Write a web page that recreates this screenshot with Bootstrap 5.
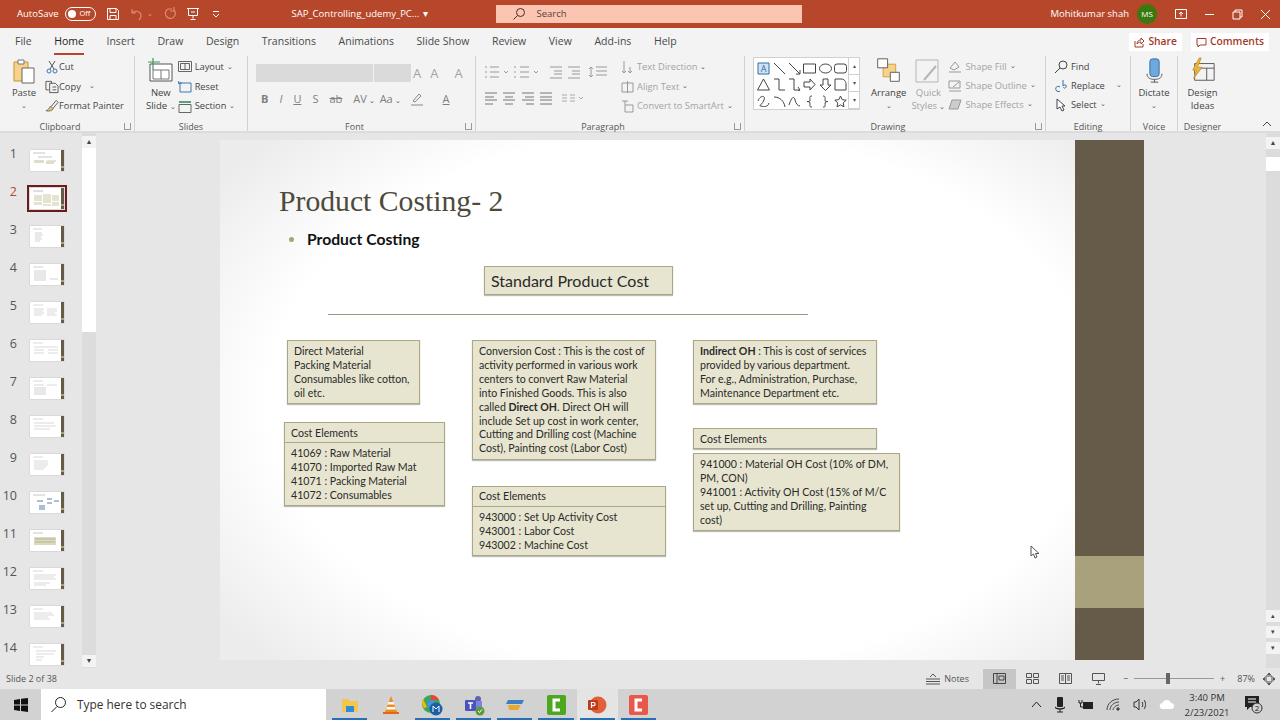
<!DOCTYPE html>
<html lang="en">
<head>
<meta charset="UTF-8">
<title>PowerPoint - Product Costing</title>
<link href="https://cdn.jsdelivr.net/npm/bootstrap@5.3.0/dist/css/bootstrap.min.css" rel="stylesheet">
<style>
    html, body { width: 1280px; height: 720px; overflow: hidden; }
    body { font-family: "Open Sans", "Noto Sans", sans-serif; font-size: 10px; color: #444; background: #e6e6e6; }
    svg { display: block; flex: none; }

    .title-bar { height: 28px; background: #b7472a; color: #fff; padding-left: 17px; }
    .title-bar .ts { font-size: 9.5px; }
    .toggle-off { width: 31px; height: 14px; border: 1px solid #fff; border-radius: 7px; margin: 0 10px 0 6px; padding-left: 2px; font-size: 7.5px; gap: 4px; }
    .toggle-dot { width: 8px; height: 8px; border-radius: 50%; background: #fff; }
    .qa-undo { margin-left: 9px; } .qa-redo { margin-left: 11px; } .qa-show { margin-left: 8px; } .qa-more { margin-left: 12px; }
    .file-name { margin-left: 72px; width: 204px; }
    .search-box { width: 306px; height: 18px; background: #fbc5b1; color: #5a4038; padding-left: 16px; gap: 11px; font-size: 9.5px; }
    .user-name { margin-right: 8px; }
    .avatar { width: 20px; height: 20px; border-radius: 50%; background: #39790f; font-size: 8px; margin-right: 18px; }
    .win-btns { gap: 17px; padding-right: 9px; }

    .tabs { height: 28px; background: #f3f3f3; padding-left: 15px; gap: 22.6px; font-size: 10.5px; color: #4a4a4a; }
    .tab-on { color: #222; position: relative; }
    .tab-on::after { content: ""; position: absolute; left: 0; right: 0; bottom: -5px; height: 2px; background: #b7472a; }
    .top-btn { height: 18px; background: #fff; color: #a23a2a; font-weight: 600; gap: 3px; padding: 0 5px; font-size: 10.3px; }
    .top-btns { gap: 9px; margin-right: 11px; }

    .ribbon { height: 77px; background: #f3f3f3; border-bottom: 2px solid #dcdcdc; }
    .rb-group { position: relative; border-right: 1px solid #d2d2d2; flex: none; }
    .rb-body { height: 60px; padding-top: 1px; }
    .rb-label { text-align: center; font-size: 9px; color: #555; line-height: 12px; margin-top: 5px; }
    .lab-shift { padding-right: 14px; }
    .launcher { position: absolute; right: 3px; bottom: 1px; width: 7px; height: 7px; border: 1px solid #999; border-top: 0; }
    .w-clip { width: 135px; } .w-slides { width: 113px; } .w-font { width: 228px; }
    .w-para { width: 269px; } .w-draw { width: 301px; } .w-edit { width: 85px; }
    .w-voice { width: 47px; } .w-design { width: 49px; border-right: 0; }

    .big-btn { text-align: center; line-height: 13px; font-size: 9.5px; color: #444; }
    .big-btn svg { margin: 0 auto 2px; }
    .btn-paste { margin-left: 11px; } .btn-new { margin-left: 11px; }
    .btn-arrange { margin-left: 11px; } .btn-quick { margin-left: 5px; }
    .chev { font-size: 7px; color: #555; }
    .stack > div { height: 20px; gap: 3px; white-space: nowrap; font-size: 9.3px; color: #444; }
    .stack.rows-19 > div { height: 19px; }
    .w-clip .stack > div { gap: 0; }
    .st-slides { margin-left: 2px; } .st-para { margin-left: 12px; } .st-shape { margin-left: 3px; }
    .off, .stack > div.off { color: #a3a3a3; }

    .font-row1 { margin-top: 7px; height: 18px; }
    .font-a { font-size: 13px; line-height: 18px; color: #a3a3a3; margin-left: 2px; }
    .font-a2 { margin-left: 9px; }
    .font-a3 { margin-left: 16px; }
    .combo { height: 18px; background: #dadada; }
    .combo-a { width: 117px; margin-right: 1px; } .combo-b { width: 37px; }
    .fmt { margin-top: 10px; height: 14px; padding-left: 5px; font-size: 11px; color: #808080; gap: 11px; }
    .fmt-wide { margin-right: -6px; }
    .fmt-pen { margin-left: -2px; } .fmt-color { margin-left: 8px; }
    .para-row2 { margin-top: 12px; }
    .gallery { width: 107px; height: 53px; background: #fff; border: 1px solid #d0d0d0; }
    .gal-grid { width: 94px; padding: 2px 0 0 2px; display: grid; grid-template-columns: repeat(6, 15.4px); grid-auto-rows: 16.5px; place-items: center; }
    .gal-side { width: 11px; border-left: 1px solid #d0d0d0; }
    .gal-side > div { flex: 1; border-bottom: 1px solid #d0d0d0; font-size: 6px; color: #555; }

    .main-area { height: 535px; }
    .thumbs { width: 82px; padding-top: 7px; }
    .thumb-row { height: 38px; }
    .thumb-no { width: 17px; text-align: right; font-size: 12.5px; color: #555; padding-top: 5px; }
    .thumb-no.cur { color: #b7472a; }
    .thumb-box { margin: 10px 0 0 13px; width: 34px; height: 21px; background: #fff; box-shadow: 0 0 1px #999; }
    .thumb-box.cur { outline: 2px solid #6d1a1f; outline-offset: 1px; }
    .thumb-faint { opacity: .65; }
    .vscroll { width: 14px; background: #dcdcdc; }
    .v-btn { height: 12px; background: #f3f3f3; font-size: 7px; color: #444; flex: none; }
    .v-first { margin-top: 3px; } .v-last { margin-bottom: 1px; }
    .v-thumb { height: 184px; background: #fff; flex: none; }
    .v-thumb-r { height: 14px; background: #fff; margin-top: 8px; flex: none; }
    .v-gap { margin-top: 4px; } .v-end { margin-bottom: 14px; }

    .stage { position: relative; flex: 1; }
    .slide { position: absolute; left: 124px; top: 7px; width: 924px; height: 520px; background: radial-gradient(ellipse 62% 72% at 50% 50%, #fff 72%, #ececec 100%); overflow: hidden; font-family: "Lato", "Open Sans", sans-serif; color: #2a2a2a; }
    .band { position: absolute; left: 855px; top: 0; width: 69px; height: 100%; background: #665a48; }
    .band-mid { position: absolute; left: 855px; top: 416px; width: 69px; height: 52px; background: #a9a17c; }
    .s-title { position: absolute; left: 59px; top: 41px; font-family: "Liberation Serif", serif; font-size: 29.7px; line-height: 40px; color: #4e4a3b; white-space: nowrap; }
    .s-bullet { position: absolute; left: 69px; top: 97px; width: 5px; height: 5px; border-radius: 50%; background: #a9a17c; }
    .s-sub { position: absolute; left: 87px; top: 89px; font-weight: 700; font-size: 15.7px; line-height: 20px; color: #111; }
    .s-rule { position: absolute; left: 108px; top: 174px; width: 480px; height: 1px; background: #9a9878; }
    .sbox { position: absolute; background: #e7e5cf; border: 1px solid #a9a883; box-shadow: 0 1px 1px #bbb; font-size: 10.6px; line-height: 13.9px; padding: 4px 6px; }
    .sbox-head { border-bottom: 1px solid #a9a883; height: 20px; padding: 3px 6px; margin: -4px -6px 4px; }
    .b-ce1 .sbox-head { padding-top: 4px; }
    .b-std { left: 264px; top: 126px; width: 189px; height: 29px; font-size: 16px; line-height: 27px; padding: 0 6px; }
    .b-dm { left: 67px; top: 200px; width: 133px; height: 64px; }
    .b-ce1 { left: 64px; top: 282px; width: 161px; height: 84px; }
    .b-cc { left: 252px; top: 200px; width: 184px; height: 120px; padding-right: 10px; }
    .b-ce2 { left: 252px; top: 346px; width: 194px; height: 70px; }
    .b-ind { left: 473px; top: 200px; width: 184px; height: 64px; }
    .b-ce3h { left: 473px; top: 288px; width: 184px; height: 21px; }
    .b-ce3 { left: 473px; top: 313px; width: 207px; height: 78px; }
    .s-cursor { position: absolute; left: 810px; top: 405px; }

    .status-bar { height: 21px; background: #e6e6e6; padding-left: 6px; font-size: 9px; color: #555; }
    .notes-label { margin: 0 14px 0 4px; }
    .view-btn { width: 33px; height: 20px; }
    .view-btn.cur { background: #c6c6c6; }
    .zoom-track { width: 80px; height: 1px; background: #999; position: relative; margin: 0 6px; }
    .zoom-knob { position: absolute; left: 32px; top: -5px; width: 4px; height: 11px; background: #666; }
    .zoom-pct { margin-left: 12px; }
    .zoom-fit { margin: 0 5px 0 8px; }

    .taskbar { height: 31px; background: #d2d2d2; color: #222; }
    .start-cell { width: 41px; }
    .win-search { width: 285px; height: 31px; background: #fff; padding-left: 9px; gap: 10px; font-size: 11.9px; color: #333; }
    .task-icons { margin-left: 3px; }
    .task-cell { position: relative; width: 41.3px; height: 31px; }
    .task-cell.cur { background: #e4e4e4; }
    .task-cell.run::after { content: ""; position: absolute; left: 3px; right: 3px; bottom: 0; height: 2px; background: #2a6fb5; }
    .tray { gap: 12px; padding-right: 17px; }
    .clock { text-align: center; font-size: 9.5px; line-height: 15px; color: #333; margin-left: -12px; width: 66px; }
    .notify { margin-left: -8px; }
</style>
</head>
<body>

<!-- title bar -->
<div class="title-bar d-flex align-items-center">
    <span class="ts">AutoSave</span>
    <div class="toggle-off d-flex align-items-center"><span class="toggle-dot"></span><span>Off</span></div>
    <svg width="14" height="14" viewBox="0 0 14 14" fill="none" stroke="#fff"><path d="M1.5 1.5h9l2 2v9h-11zM4 1.5v4h6v-4M4 12.5v-4h6v4"/></svg>
    <svg class="qa-undo" width="14" height="14" viewBox="0 0 14 14" fill="none" stroke="#d98d76" stroke-width="1.2"><path d="M3 2v4h4M3 6c3-3 9-2 9 3 0 2-1 3-2 4"/></svg>
    <span class="ms-1 chev text-white-50">&#8964;</span>
    <svg class="qa-redo" width="14" height="14" viewBox="0 0 14 14" fill="none" stroke="#d98d76" stroke-width="1.2"><path d="M8 2h-4a5 5 0 1 0 6 1M10 0v4h-4"/></svg>
    <svg class="qa-show" width="14" height="14" viewBox="0 0 14 14" fill="none" stroke="#fff"><path d="M1 1.5h12M2.5 1.5v7h9v-7M7 8.5v3M4.500 12.500h5M5 5h4"/></svg>
    <svg class="qa-more" width="8" height="8" viewBox="0 0 8 8" fill="none" stroke="#fff"><path d="M1 1.500h6M1 4l3 3 3-3"/></svg>
    <div class="file-name ts d-flex"><span>SAP_Controlling_udemy_PC...</span><span class="ms-1">&#9662;</span></div>
    <div class="search-box d-flex align-items-center">
        <svg width="14" height="14" viewBox="0 0 14 14" fill="none" stroke="#4a2e25"><circle cx="8.500" cy="5.500" r="4"/><path d="M5.500 8.500l-4 4"/></svg>
        <span>Search</span>
    </div>
    <div class="ms-auto user-name ts">Mohitkumar shah</div>
    <div class="avatar d-flex align-items-center justify-content-center">MS</div>
    <div class="win-btns d-flex align-items-center">
        <svg width="12" height="10" viewBox="0 0 12 10" fill="none" stroke="#fff"><path d="M.5.500h11v9H.5zM6 7.500V3M4 5l2-2 2 2"/></svg>
        <svg width="11" height="11" viewBox="0 0 11 11" stroke="#fff"><path d="M1 5.500h9"/></svg>
        <svg width="11" height="11" viewBox="0 0 11 11" fill="none" stroke="#fff"><path d="M1 3h7v7H1zM3 3V1h7v7H8"/></svg>
        <svg width="11" height="11" viewBox="0 0 11 11" stroke="#fff"><path d="M1 1l9 9M10 1l-9 9"/></svg>
    </div>
</div>

<!-- tabs -->
<div class="tabs d-flex align-items-center">
    <span>File</span><span class="tab-on">Home</span><span>Insert</span><span>Draw</span><span>Design</span><span>Transitions</span><span>Animations</span><span>Slide Show</span><span>Review</span><span>View</span><span>Add-ins</span><span>Help</span>
    <div class="ms-auto top-btns d-flex">
        <div class="top-btn d-flex align-items-center">
            <svg width="11" height="11" viewBox="0 0 11 11" fill="none" stroke="#a23a2a"><path d="M1 4v6h8V7M3 7c0-3 2-4 4-4V1l3 3-3 3V5C5 5 4 6 3 7z"/></svg>Share
        </div>
        <div class="top-btn d-flex align-items-center">
            <svg width="11" height="11" viewBox="0 0 11 11" fill="none" stroke="#a23a2a"><path d="M1 1.500h9v6.500H4l-2 2v-2H1z"/></svg>Comments
        </div>
    </div>
</div>

<!-- ribbon -->
<div class="ribbon d-flex">
    <div class="rb-group w-clip">
        <div class="rb-body d-flex">
            <div class="big-btn btn-paste">
                <svg width="26" height="27" viewBox="0 0 26 27" fill="none"><path d="M3 5h14v19H3z" fill="#f6d28a" stroke="#c9932f"/><path d="M7 3h6v4H7z" fill="#fff" stroke="#777"/><path d="M11 11h12v15H11z" fill="#fff" stroke="#666"/></svg>
                <div>Paste</div><div class="chev">&#8964;</div>
            </div>
            <div class="stack d-flex flex-column ms-2">
                <div class="d-flex align-items-center"><svg width="14" height="14" viewBox="0 0 14 14" fill="none" stroke="#555"><path d="M4 1l5 8M10 1L5 9"/><circle cx="4" cy="11" r="2" stroke="#3a78b5"/><circle cx="10" cy="11" r="2" stroke="#3a78b5"/></svg><span>Cut</span></div>
                <div class="d-flex align-items-center"><svg width="14" height="14" viewBox="0 0 15 14" fill="none" stroke="#555"><path d="M4 10H1V1h6v2M5 3h6l3 3v7H5zM8 7h4M8 10h4"/></svg><span>Copy</span><span class="chev ms-2">&#8964;</span></div>
                <div class="d-flex align-items-center"><svg width="14" height="14" viewBox="0 0 15 14" fill="none"><path d="M1 12c2 0 3-2 5-5l3 3c-2 2-4 3-8 2z" fill="#f2c56b" stroke="#666"/><path d="M7 7l5-6 2 2-5 6" stroke="#555"/></svg><span>Format Painter</span></div>
            </div>
        </div>
        <div class="rb-label lab-shift">Clipboard</div><span class="launcher"></span>
    </div>

    <div class="rb-group w-slides">
        <div class="rb-body d-flex">
            <div class="big-btn btn-new">
                <svg width="26" height="27" viewBox="0 0 26 27" fill="none"><path d="M2 7h22v17H2z" fill="#fff" stroke="#555"/><path d="M5 13h16v9H5zM13 13v9" stroke="#777"/><path d="M5 1v12M0 5h12" stroke="#3b9b5a" stroke-width="1.200"/></svg>
                <div>New</div><div>Slide <span class="chev">&#8964;</span></div>
            </div>
            <div class="stack st-slides d-flex flex-column">
                <div class="d-flex align-items-center"><svg width="14" height="13" viewBox="0 0 14 13" fill="none" stroke="#666"><path d="M.5 1.500h13v10H.5zM2.500 3.500h9v6h-9zM7 3.500v6"/></svg><span>Layout</span><span class="chev">&#8964;</span></div>
                <div class="d-flex align-items-center"><svg width="14" height="13" viewBox="0 0 14 13" fill="none" stroke="#3a78b5"><path d="M2 3h11v9H2zM0 3h4M1 1l-1 2 2 1"/></svg><span>Reset</span></div>
                <div class="d-flex align-items-center"><svg width="14" height="13" viewBox="0 0 14 13" fill="none"><path d="M1 1h12v2H1z" fill="#5aa27c"/><path d="M1 4.500h12v8H1z" stroke="#666"/></svg><span>Section</span><span class="chev">&#8964;</span></div>
            </div>
        </div>
        <div class="rb-label">Slides</div>
    </div>

    <div class="rb-group w-font">
        <div class="rb-body ps-2">
            <div class="font-row1 d-flex align-items-center">
                <div class="combo combo-a"></div><div class="combo combo-b"></div>
                <span class="font-a">A</span><span class="font-a font-a2">A</span><span class="font-a font-a3">A</span>
            </div>
            <div class="fmt d-flex align-items-center">
                <b>B</b><i>I</i><u>U</u><span>S</span><s>ab</s><span class="fmt-wide">AV<span class="chev"> &#8964;</span></span><span>Aa<span class="chev"> &#8964;</span></span>
                <svg class="fmt-pen" width="14" height="14" viewBox="0 0 14 14" fill="none" stroke="#888"><path d="M3 9l6-7 2 2-6 6zM1 13h12"/></svg>
                <span class="fmt-color"><u>A</u></span>
            </div>
        </div>
        <div class="rb-label lab-shift">Font</div><span class="launcher"></span>
    </div>

    <div class="rb-group w-para">
        <div class="rb-body d-flex ps-2">
            <div class="mt-1">
                <svg class="mt-1" width="125" height="14" viewBox="0 0 125 14" fill="none" stroke="#999"><path d="M1 2h2M6 2h9M1 7h2M6 7h9M1 12h2M6 12h9M20 6l2 2 2-2M30 2h2M36 2h9M30 7h2M36 7h9M30 12h2M36 12h9M50 6l2 2 2-2M66 2h12M70 6h8M70 9h8M66 13h12M84 2h12M88 6h8M88 9h8M84 13h12M112 2h11M112 6h11M112 10h11M107 2v10M105 4l2-2 2 2M105 10l2 2 2-2"/></svg>
                <svg class="para-row2" width="125" height="14" viewBox="0 0 125 14" fill="none" stroke="#777"><path d="M1 2h12M1 6h9M1 9h12M1 13h8M19 2h12M21 6h8M19 9h12M21 13h8M38 2h12M41 6h9M38 9h12M42 13h8M56 2h12M56 6h12M56 9h12M56 13h12"/><path d="M78 4h5M78 7h5M78 10h5M86 4h5M86 7h5M86 10h5M95 6l2 2 2-2" stroke="#aaa"/></svg>
            </div>
            <div class="stack st-para d-flex flex-column">
                <div class="off d-flex align-items-center"><svg width="13" height="14" viewBox="0 0 13 14" fill="none" stroke="#999"><path d="M3 1v12M1 11l2 2 2-2M9 7v6M7 11l2 2 2-2"/></svg><span>Text Direction</span><span class="chev">&#8964;</span></div>
                <div class="off d-flex align-items-center"><svg width="13" height="14" viewBox="0 0 13 14" fill="none" stroke="#999"><path d="M1 3h11v9H1zM6.500 1v12"/></svg><span>Align Text</span><span class="chev">&#8964;</span></div>
                <div class="off d-flex align-items-center"><svg width="13" height="14" viewBox="0 0 13 14" fill="none" stroke="#999"><path d="M4 6h8v7H4zM1 2h6M4 2v4"/></svg><span>Convert to SmartArt</span><span class="chev">&#8964;</span></div>
            </div>
        </div>
        <div class="rb-label lab-shift">Paragraph</div><span class="launcher"></span>
    </div>

    <div class="rb-group w-draw">
        <div class="rb-body d-flex ps-2">
            <div class="gallery d-flex">
                <div class="gal-grid">
                    <svg width="13" height="13" viewBox="0 0 13 13" fill="#cfe3f5" stroke="#2f6ea5"><path d="M1 1h11v11H1z"/><text x="6.500" y="10" font-size="9" text-anchor="middle" fill="#2f6ea5" stroke="none">A</text></svg>
                    <svg width="13" height="13" viewBox="0 0 13 13" stroke="#444" fill="none"><path d="M1 1l11 11"/></svg>
                    <svg width="13" height="13" viewBox="0 0 13 13" stroke="#444" fill="none"><path d="M1 1l11 11M8 12h4V8"/></svg>
                    <svg width="13" height="13" viewBox="0 0 13 13" stroke="#444" fill="none"><path d="M.5 2h12v9H.5z"/></svg>
                    <svg width="13" height="13" viewBox="0 0 13 13" stroke="#444" fill="none"><ellipse cx="6.500" cy="6.500" rx="6" ry="4.500"/></svg>
                    <svg width="13" height="13" viewBox="0 0 13 13" stroke="#444" fill="none"><rect x=".5" y="2" width="12" height="9" rx="2.500"/></svg>
                    <svg width="13" height="13" viewBox="0 0 13 13" stroke="#444" fill="none"><path d="M6.500 1l6 11H.5z"/></svg>
                    <svg width="13" height="13" viewBox="0 0 13 13" stroke="#444" fill="none"><path d="M1 1h5v11h6"/></svg>
                    <svg width="13" height="13" viewBox="0 0 13 13" stroke="#444" fill="none"><path d="M1 1h5v11h6M10 9l2 3-2 1"/></svg>
                    <svg width="13" height="13" viewBox="0 0 13 13" stroke="#444" fill="none"><path d="M1 4h6V1l5 5.500-5 5.500V9H1z"/></svg>
                    <svg width="13" height="13" viewBox="0 0 13 13" stroke="#444" fill="none"><path d="M4 1h5v6h3l-5.500 5.500L1 7h3z"/></svg>
                    <svg width="13" height="13" viewBox="0 0 13 13" stroke="#444" fill="none"><path d="M1 1h6c5 0 5 5 5 5v6H1z"/></svg>
                    <svg width="13" height="13" viewBox="0 0 13 13" stroke="#444" fill="none"><path d="M1 6c2-6 8-6 6-1S1 11 4 11c3 1 7 1 8-3"/></svg>
                    <svg width="13" height="13" viewBox="0 0 13 13" stroke="#444" fill="none"><path d="M1 2c6 0 10 4 11 10"/></svg>
                    <svg width="13" height="13" viewBox="0 0 13 13" stroke="#444" fill="none"><path d="M1 10c3-9 5-9 6-5s3 6 5 6"/></svg>
                    <svg width="13" height="13" viewBox="0 0 13 13" stroke="#444" fill="none"><path d="M9 1C6 1 7 3 7 5S6 6.500 4 6.500C6 6.500 7 7 7 9s-1 3 2 3"/></svg>
                    <svg width="13" height="13" viewBox="0 0 13 13" stroke="#444" fill="none"><path d="M4 1c3 0 2 2 2 4s1 1.500 3 1.500C7 6.500 6 7 6 9s1 3-2 3"/></svg>
                    <svg width="13" height="13" viewBox="0 0 13 13" stroke="#444" fill="none"><path d="M6.500 1l1.700 3.700 4 .5-3 2.700.8 4-3.500-2-3.500 2 .8-4-3-2.700 4-.5z"/></svg>
                </div>
                <div class="gal-side d-flex flex-column text-center">
                    <div class="d-flex align-items-center justify-content-center">&#9652;</div>
                    <div class="d-flex align-items-center justify-content-center">&#9662;</div>
                    <div class="d-flex align-items-center justify-content-center">&#9662;</div>
                </div>
            </div>
            <div class="big-btn btn-arrange">
                <svg width="27" height="27" viewBox="0 0 30 30" fill="none"><path d="M9 8h14v14H9z" fill="#f6d28a" stroke="#d39a3a"/><path d="M3 2h11v10H3z" fill="#fff" stroke="#555"/><path d="M17 17h10v10H17z" fill="#fff" stroke="#555"/></svg>
                <div>Arrange</div><div class="chev">&#8964;</div>
            </div>
            <div class="big-btn btn-quick off">
                <svg width="26" height="27" viewBox="0 0 26 27" fill="none" stroke="#b5b5b5"><path d="M1 3h22v22H1z"/><path d="M9 23l12-14" stroke-width="2"/></svg>
                <div class="off">Quick</div><div class="off">Styles <span class="chev">&#8964;</span></div>
            </div>
            <div class="stack st-shape rows-19 d-flex flex-column">
                <div class="off d-flex align-items-center"><svg width="14" height="14" viewBox="0 0 14 14" fill="none" stroke="#999"><path d="M2 8l5-6 4 5-5 3zM1 12h12"/></svg><span>Shape Fill</span><span class="chev">&#8964;</span></div>
                <div class="off d-flex align-items-center"><svg width="14" height="14" viewBox="0 0 14 14" fill="none" stroke="#999"><path d="M1 2h11v7H1zM1 12h12M5 8l6-5"/></svg><span>Shape Outline</span><span class="chev">&#8964;</span></div>
                <div class="off d-flex align-items-center"><svg width="14" height="14" viewBox="0 0 14 14" fill="#ccc" stroke="#999"><path d="M4 2h9l-3 9H1z"/></svg><span>Shape Effects</span><span class="chev">&#8964;</span></div>
            </div>
        </div>
        <div class="rb-label lab-shift">Drawing</div><span class="launcher"></span>
    </div>

    <div class="rb-group w-edit">
        <div class="rb-body stack rows-19 d-flex flex-column ps-2">
            <div class="d-flex align-items-center"><svg width="14" height="14" viewBox="0 0 14 14" fill="none" stroke="#444"><circle cx="9" cy="5" r="4"/><path d="M6 8l-5 5"/></svg><span>Find</span></div>
            <div class="d-flex align-items-center"><svg width="14" height="14" viewBox="0 0 14 14" fill="none" stroke="#2f6ea5"><path d="M6 8c-3-2-5 1-4 3s3 2 4 1M9 1v6c2-2 4-1 3 1s-2 1-3 0"/></svg><span>Replace</span><span class="chev ms-2">&#8964;</span></div>
            <div class="d-flex align-items-center"><svg width="14" height="14" viewBox="0 0 14 14" fill="#fff" stroke="#444"><path d="M3 1v10l3-2 2 4 2-1-2-4h3z"/></svg><span>Select</span><span class="chev">&#8964;</span></div>
        </div>
        <div class="rb-label">Editing</div>
    </div>

    <div class="rb-group w-voice">
        <div class="rb-body big-btn">
            <svg width="19" height="27" viewBox="0 0 20 29" fill="none"><rect x="5" y="2" width="10" height="19" rx="3" fill="#6fa8dc" stroke="#2f6ea5"/><path d="M2 18c0 5 4 6 8 6s8-1 8-6M10 24v3M6 27h8" stroke="#555"/></svg>
            <div>Dictate</div><div class="chev">&#8964;</div>
        </div>
        <div class="rb-label">Voice</div>
    </div>

    <div class="rb-group w-design">
        <div class="rb-body big-btn">
            <svg width="26" height="27" viewBox="0 0 28 29" fill="none"><path d="M5 7h21v18H5zM5 12h21M18 12v13" stroke="#555"/><path d="M10 1L3 14h4l-3 9 9-12H8l4-10z" fill="#f1b73c" stroke="#c9932f"/></svg>
            <div>Design</div><div>Ideas</div>
        </div>
        <div class="rb-label">Designer</div>
    </div>

    <div class="ms-auto align-self-end pe-2 pb-1">
        <svg width="10" height="6" viewBox="0 0 10 6" fill="none" stroke="#444"><path d="M1 5l4-4 4 4"/></svg>
    </div>
</div>

<!-- thumbnails + slide -->
<div class="main-area d-flex">
    <div class="thumbs" id="thumbs"></div>
    <div class="vscroll d-flex flex-column">
        <div class="v-btn v-first d-flex align-items-center justify-content-center">&#9650;</div>
        <div class="v-thumb"></div>
        <div class="flex-grow-1"></div>
        <div class="v-btn v-last d-flex align-items-center justify-content-center">&#9660;</div>
    </div>

    <div class="stage">
        <div class="slide">
            <div class="band"></div><div class="band-mid"></div>
            <div class="s-title">Product Costing- 2</div>
            <span class="s-bullet"></span>
            <div class="s-sub">Product Costing</div>
            <div class="sbox b-std">Standard Product Cost</div>
            <div class="s-rule"></div>

            <div class="sbox b-dm">Direct Material<br>Packing Material<br>Consumables like cotton, oil etc.</div>
            <div class="sbox b-ce1">
                <div class="sbox-head">Cost Elements</div>
                41069 : Raw Material<br>41070 : Imported Raw Mat<br>41071 : Packing Material<br>41072 : Consumables
            </div>

            <div class="sbox b-cc">Conversion Cost : This is the cost of activity performed in various work centers to convert Raw Material into Finished Goods. This is also called <b>Direct OH</b>. Direct OH will include Set up cost in work center, Cutting and Drilling cost (Machine Cost), Painting cost (Labor Cost)</div>
            <div class="sbox b-ce2">
                <div class="sbox-head">Cost Elements</div>
                943000 : Set Up Activity Cost<br>943001 : Labor Cost<br>943002 : Machine Cost
            </div>

            <div class="sbox b-ind"><b>Indirect OH</b> : This is cost of services provided by various department.<br>For e.g., Administration, Purchase, Maintenance Department etc.</div>
            <div class="sbox b-ce3h">Cost Elements</div>
            <div class="sbox b-ce3">941000 : Material OH Cost (10% of DM, PM, CON)<br>941001 : Activity OH Cost (15% of M/C set up, Cutting and Drilling, Painting<br>cost)</div>

            <svg class="s-cursor" width="10" height="14" viewBox="0 0 10 14" fill="#fff" stroke="#555"><path d="M1 1v10l2.500-2 1.500 4 2-1-1.500-3.500H9z"/></svg>
        </div>
    </div>

    <div class="vscroll d-flex flex-column">
        <div class="v-btn d-flex align-items-center justify-content-center mt-1">&#9650;</div>
        <div class="v-thumb-r"></div>
        <div class="flex-grow-1"></div>
        <div class="v-btn d-flex align-items-center justify-content-center">&#9652;</div>
        <div class="v-btn v-gap d-flex align-items-center justify-content-center">&#9662;</div>
        <div class="v-btn v-gap v-end d-flex align-items-center justify-content-center">&#9662;</div>
    </div>
</div>

<!-- status bar -->
<div class="status-bar d-flex align-items-center">
    <span>Slide 2 of 38</span>
    <div class="ms-auto d-flex align-items-center">
        <svg width="14" height="12" viewBox="0 0 14 12" fill="none" stroke="#555"><path d="M0 6h14M0 8.500h14M0 11h14M4 4l3-3 3 3"/></svg>
        <span class="notes-label">Notes</span>
        <div class="view-btn cur d-flex align-items-center justify-content-center"><svg width="13" height="11" viewBox="0 0 13 11" fill="none" stroke="#444"><path d="M.5.500h12v10H.5zM4 .5v10M6 3h5v4H6z"/></svg></div>
        <div class="view-btn d-flex align-items-center justify-content-center"><svg width="13" height="11" viewBox="0 0 13 11" fill="none" stroke="#555"><path d="M.5.500h5v4h-5zM7.500.500h5v4h-5zM.5 6.500h5v4h-5zM7.500 6.500h5v4h-5z"/></svg></div>
        <div class="view-btn d-flex align-items-center justify-content-center"><svg width="13" height="11" viewBox="0 0 13 11" fill="none" stroke="#555"><path d="M.5.500h12v10H.5zM6.500.500v10M2 3h3M2 5h3M2 7h3M8 3h3M8 5h3M8 7h3"/></svg></div>
        <div class="view-btn d-flex align-items-center justify-content-center"><svg width="13" height="12" viewBox="0 0 13 12" fill="none" stroke="#555"><path d="M.5.500h12v7H.5zM6.500 7.500v3M4 11.500h5"/></svg></div>
        <span class="ms-2">&minus;</span>
        <div class="zoom-track"><span class="zoom-knob"></span></div>
        <span>+</span>
        <span class="zoom-pct">87%</span>
        <svg class="zoom-fit" width="12" height="12" viewBox="0 0 12 12" fill="none" stroke="#555"><path d="M3 3h6v6H3zM6 0l-1.500 1.500h3zM6 12l-1.500-1.500h3zM0 6l1.500-1.500v3zM12 6l-1.500-1.500v3z"/></svg>
    </div>
</div>

<!-- taskbar -->
<div class="taskbar d-flex align-items-center">
    <div class="start-cell d-flex justify-content-center">
        <svg width="14" height="14" viewBox="0 0 14 14" fill="#111"><path d="M0 2l6-1v5.500H0zM7 .8l7-.8v6.500H7zM0 7.500h6V13l-6-1zM7 7.500h7V14l-7-1z"/></svg>
    </div>
    <div class="win-search d-flex align-items-center">
        <svg width="17" height="17" viewBox="0 0 17 17" fill="none" stroke="#222"><circle cx="10.500" cy="6.500" r="5"/><path d="M7 10.500l-5.500 5.500"/></svg>
        <span>Type here to search</span>
    </div>
    <div class="task-icons d-flex">
        <div class="task-cell run d-flex align-items-center justify-content-center"><svg width="18" height="18" viewBox="0 0 18 18"><path d="M1 3h6l2 2h8v11H1z" fill="#f3c64e"/><path d="M5 10h8v6H5z" fill="#2f8dd0"/></svg></div>
        <div class="task-cell d-flex align-items-center justify-content-center"><svg width="18" height="20" viewBox="0 0 18 20"><path d="M9 1l6 16H3z" fill="#f08a1d"/><path d="M6.500 7h5l.8 2.500H5.700zM5 12h8l.8 2.500H4.200z" fill="#fff"/><path d="M1 17h16v2H1z" fill="#e06a10"/></svg></div>
        <div class="task-cell run d-flex align-items-center justify-content-center"><svg width="22" height="22" viewBox="0 0 22 22"><circle cx="10" cy="10" r="9" fill="#3aa757"/><path d="M10 1a9 9 0 0 1 8 5h-8z" fill="#ea4335"/><path d="M2 5l4 8-3 1a9 9 0 0 1-1-9z" fill="#fbbc04"/><circle cx="10" cy="10" r="4" fill="#4a90e2"/><circle cx="15" cy="15" r="6.500" fill="#1a5fa8"/><path d="M12 18v-6l3 3 3-3v6" fill="none" stroke="#fff"/></svg></div>
        <div class="task-cell run d-flex align-items-center justify-content-center"><svg width="22" height="22" viewBox="0 0 22 22"><circle cx="15" cy="5" r="3" fill="#6264a7"/><path d="M8 7h11v9H8z" fill="#7b83eb"/><rect x="2" y="6" width="11" height="11" rx="1" fill="#4b53bc"/><path d="M5 9h5M7.500 9v6" stroke="#fff" stroke-width="1.500"/><circle cx="17" cy="17" r="4.500" fill="#5b9b3a"/><path d="M15 17l1.500 1.500 2.500-3" stroke="#fff" fill="none"/></svg></div>
        <div class="task-cell run d-flex align-items-center justify-content-center"><svg width="20" height="12" viewBox="0 0 20 12"><path d="M3 1h16l-2 4H1z" fill="#3d7fc4"/><path d="M3 6h13l-3 5H4z" fill="#e9a92f"/></svg></div>
        <div class="task-cell run d-flex align-items-center justify-content-center"><svg width="21" height="22" viewBox="0 0 21 22"><rect x="1" y="1" width="19" height="20" rx="2" fill="#4da81f"/><path d="M14 6H8v10h6" fill="none" stroke="#fff" stroke-width="3"/></svg></div>
        <div class="task-cell cur run d-flex align-items-center justify-content-center"><svg width="20" height="20" viewBox="0 0 20 20"><circle cx="11" cy="10" r="8.500" fill="#e0603a"/><rect x="1" y="5" width="10" height="10" rx="1" fill="#c13b1b"/><path d="M4.500 13V7.500h2a1.500 1.500 0 0 1 0 3.200h-2" fill="none" stroke="#fff" stroke-width="1.200"/></svg></div>
        <div class="task-cell run d-flex align-items-center justify-content-center"><svg width="21" height="22" viewBox="0 0 21 22"><rect x="1" y="1" width="19" height="20" rx="2" fill="#e8574a"/><path d="M14 6H8v10h6" fill="none" stroke="#fff" stroke-width="3"/></svg></div>
    </div>
    <div class="tray ms-auto d-flex align-items-center">
        <svg width="11" height="7" viewBox="0 0 11 7" fill="none" stroke="#222"><path d="M1 6l4.500-5L10 6"/></svg>
        <svg width="12" height="16" viewBox="0 0 12 16" fill="#222"><rect x="3" y="0" width="6" height="10" rx="1"/><path d="M1 9c0 3 10 3 10 0v2c-2 2-8 2-10 0zM5.500 12h1v3h-1zM3 14.500h6v1H3z"/></svg>
        <svg width="16" height="11" viewBox="0 0 16 11" fill="#222"><path d="M5 3h10v7H5z"/><path d="M1 1v3h3V1M2.500 4v4H5" fill="none" stroke="#222"/></svg>
        <svg width="15" height="13" viewBox="0 0 15 13" fill="none" stroke="#444"><path d="M1 12C1 6 6 1 13 1M4 12c0-4 4-8 9-8M7 12c0-2 3-5 6-5"/><circle cx="12" cy="11" r="1.200" fill="#444"/></svg>
        <svg width="14" height="13" viewBox="0 0 14 13" fill="none" stroke="#333"><path d="M1 4h2l3-3v11L3 9H1zM9 4c1 1 1 4 0 5M11 2c2 2 2 7 0 9"/></svg>
        <svg width="15" height="11" viewBox="0 0 15 11" fill="#fff"><path d="M4 10a3 3 0 0 1-.5-6A4.500 4.500 0 0 1 12 4a3 3 0 0 1 0 6z"/></svg>
        <div class="clock"><div>3:40 PM</div><div>2/23/2021</div></div>
        <svg class="notify" width="19" height="19" viewBox="0 0 19 19"><path d="M1 1h14v11H6l-3 3v-3H1z" fill="#222"/><path d="M4 4h8M4 7h8" stroke="#fff"/><circle cx="13" cy="13" r="5" fill="#d2d2d2" stroke="#333"/><text x="13" y="16" font-size="8" text-anchor="middle" fill="#222">2</text></svg>
    </div>
</div>

<script>
    // filmstrip on the left, 14 slides with a rough preview of each
    const strip = document.getElementById("thumbs");
    const previews = [
        '<path d="M3 3h12M8 7h14M4 11h10M17 11h9" stroke="#aaa"/><path d="M4 10h10v3H4zM16 11h8v3h-8z" fill="#cfcdb0"/>',
        '<path d="M3 3h10" stroke="#999"/><path d="M4 7h8v6H4zM13 6h8v9h-8zM22 7h7v6h-7zM4 14h8v3H4zM13 16h8v2h-8zM22 14h7v4h-7z" fill="#d8d6b8"/>',
        '<path d="M3 3h9M5 7h7M5 9h8M5 11h6M5 13h7M5 15h5" stroke="#bbb"/>',
        '<path d="M3 3h10" stroke="#bbb"/><path d="M4 6h12v11H4z" fill="#ddd"/><path d="M20 15h8" stroke="#bbb"/>',
        '<path d="M3 3h10M4 7h10M17 7h10M4 9h9M17 9h10M4 11h10M17 11h8M4 13h8M17 13h10" stroke="#c4c4c4"/>',
        '<path d="M3 3h10M4 7h24M4 10h10M18 10h10M4 13h10M18 13h10" stroke="#c4c4c4"/>',
        '<path d="M3 3h10M4 7h10M17 7h10" stroke="#c4c4c4"/><path d="M4 9h12v8H4z" fill="#ddd"/>',
        '<path d="M3 3h10M4 7h20M4 10h22M4 13h16" stroke="#c4c4c4"/>',
        '<path d="M3 3h10M4 7h14M4 9h14M4 11h14M4 13h12M4 15h10" stroke="#c4c4c4"/>',
        '<path d="M3 3h12" stroke="#aaa"/><path d="M7 9h6M17 7h5M17 11h5M24 9h5" stroke="#5b7fa8" stroke-width="1.500"/><path d="M9 13h6v5H9z" fill="#7f9cc0"/>',
        '<path d="M3 3h10" stroke="#aaa"/><path d="M4 7h22v8H4z" fill="#c8c79a"/><path d="M5 9h20M5 12h20" stroke="#8f8d6c"/>',
        '<path d="M3 3h10M4 7h22M4 9h20M4 11h22M4 15h16M4 17h12" stroke="#c4c4c4"/>',
        '<path d="M3 3h10M4 7h18M4 9h20M4 11h14M4 13h16" stroke="#c4c4c4"/>',
        '<path d="M3 3h10M6 7h20M6 10h18M6 13h8M6 16h6" stroke="#c4c4c4"/>'
    ];
    previews.forEach(function (p, i) {
        const cur = i === 1 ? " cur" : "";
        strip.insertAdjacentHTML("beforeend",
            '<div class="thumb-row d-flex">' +
            '<div class="thumb-no' + cur + '">' + (i + 1) + '</div>' +
            '<div class="thumb-box' + cur + '"><svg width="34" height="21" viewBox="0 0 34 21" fill="none"><g class="thumb-faint">' + p + '</g>' +
            '<path d="M31 0h3v21h-3z" fill="#665a48"/><path d="M31 16h3v2h-3z" fill="#a9a17c"/></svg></div>' +
            '</div>');
    });
</script>
<script src="https://cdn.jsdelivr.net/npm/bootstrap@5.3.0/dist/js/bootstrap.bundle.min.js"></script>
</body>
</html>
